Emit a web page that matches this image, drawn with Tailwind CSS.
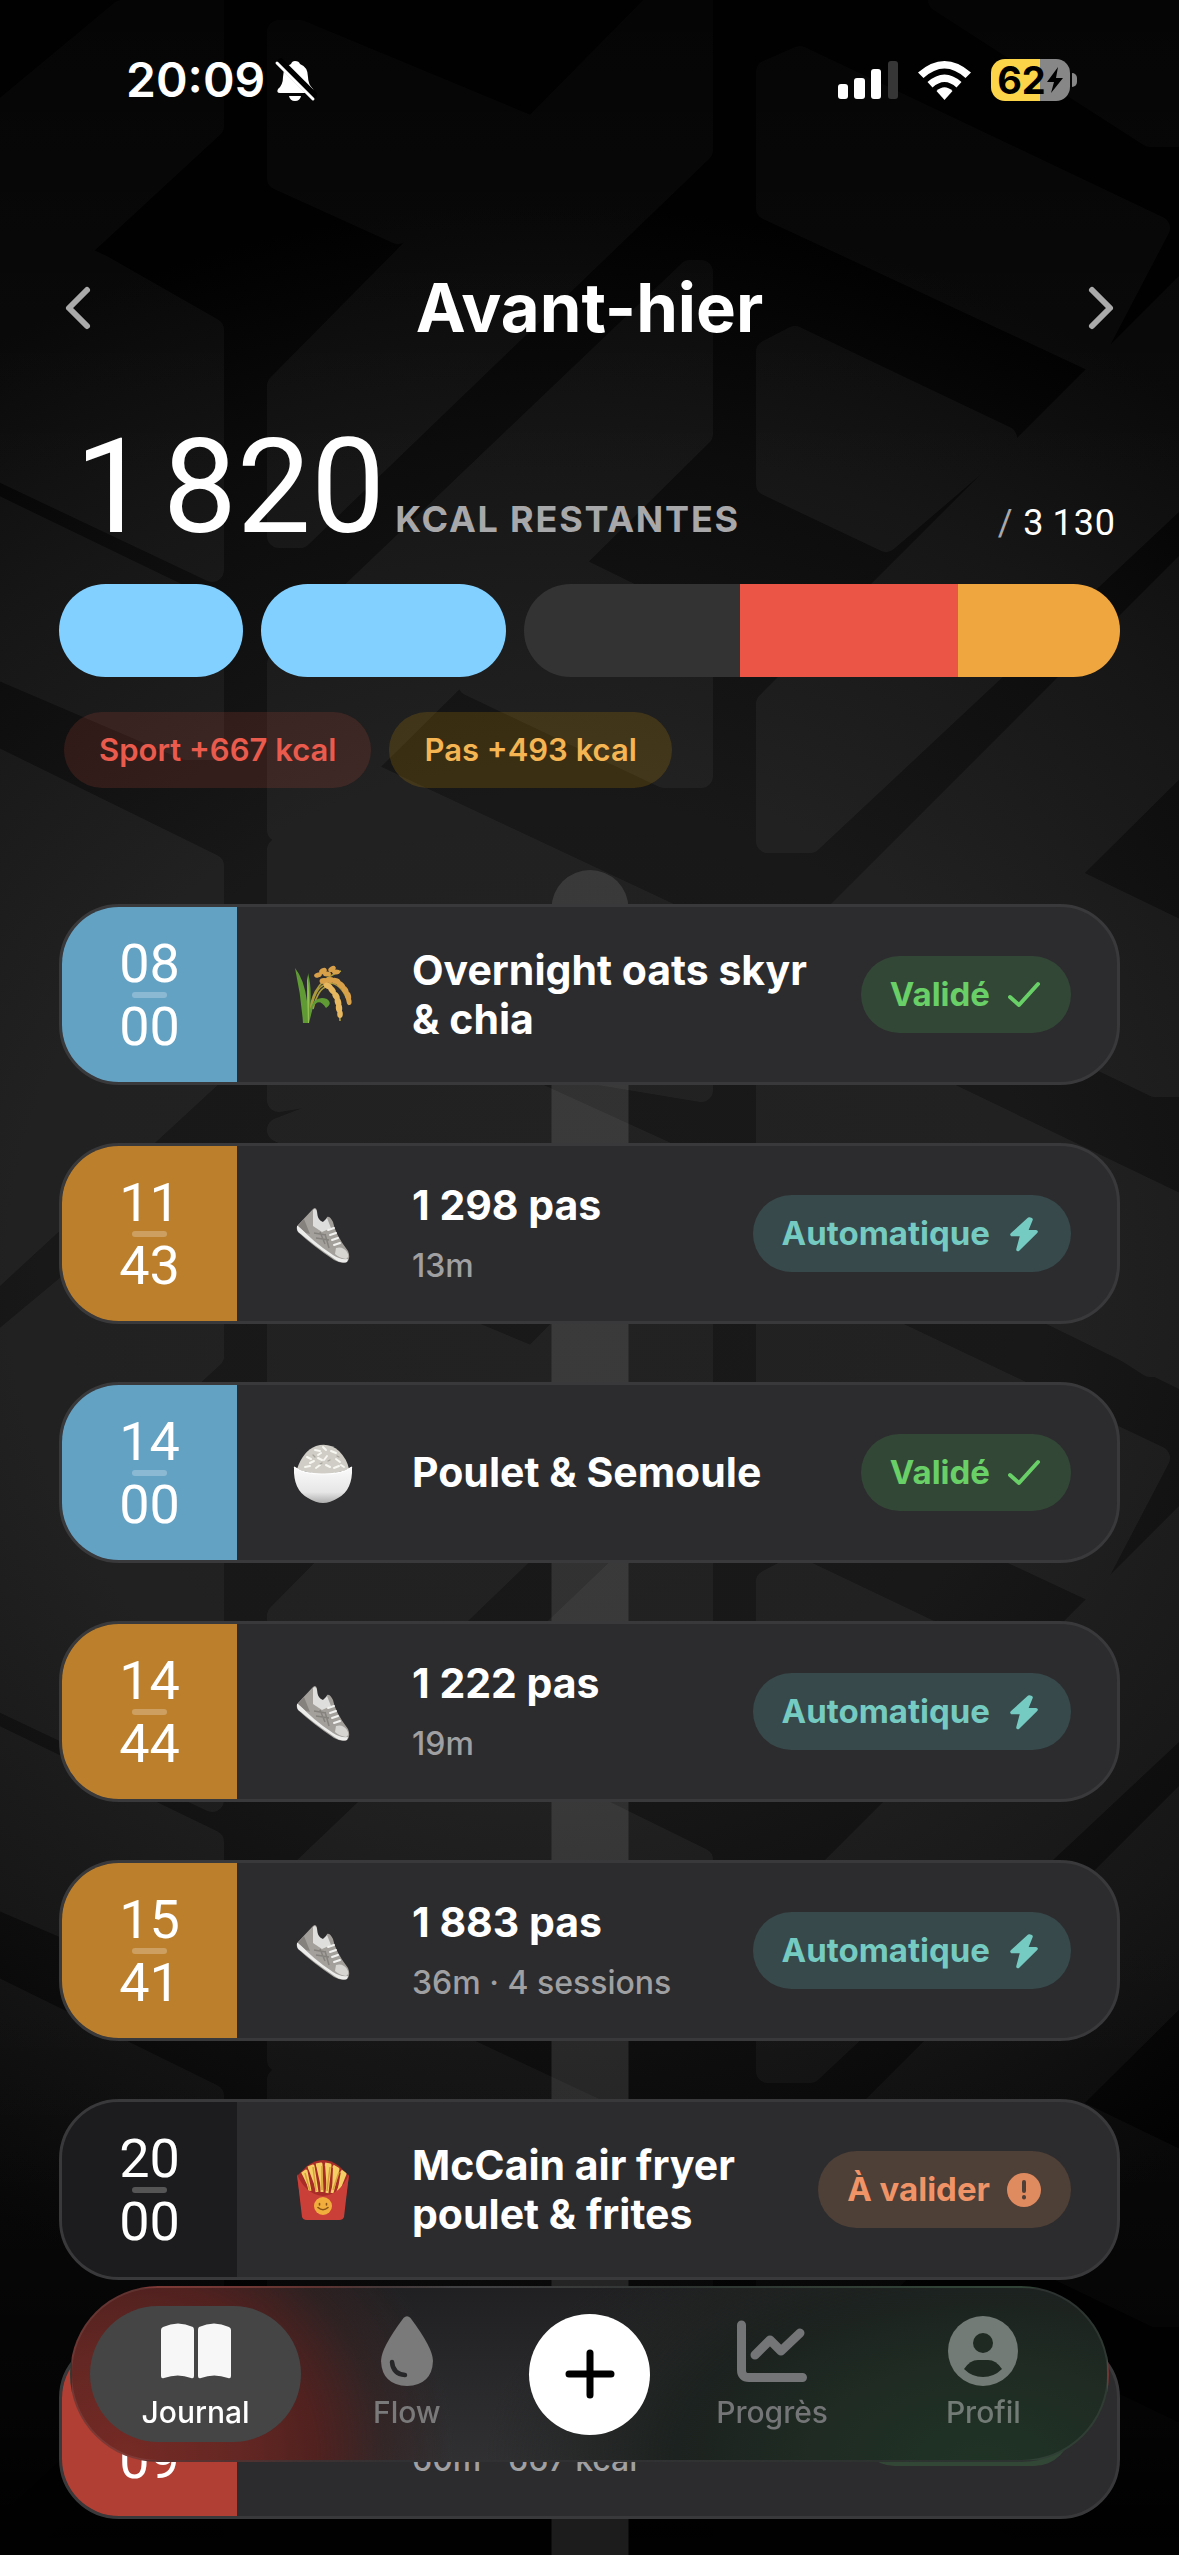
<!DOCTYPE html>
<html lang="fr">
<head>
<meta charset="utf-8">
<meta name="viewport" content="width=device-width, initial-scale=1">
<title>Journal</title>
<script src="https://cdn.jsdelivr.net/npm/@tailwindcss/browser@4"></script>
</head>
<body class="bg-black text-white font-['Inter',sans-serif]">

<!-- Shared icons -->
<svg class="absolute size-0" aria-hidden="true">
  <defs><linearGradient id="bowlFill" x1="0" y1="0" x2="0" y2="1"><stop offset="0" stop-color="#fbfbfb"/><stop offset=".7" stop-color="#e6e6e6"/><stop offset="1" stop-color="#aeaeae"/></linearGradient></defs>
  <symbol id="check" viewBox="0 0 36 36"><path d="M4 20l9 8L32 7" fill="none" stroke="currentColor" stroke-width="4" stroke-linecap="round" stroke-linejoin="round"/></symbol>
  <symbol id="bolt" viewBox="0 0 36 36"><path d="M23 3L6 18.500H16L12 33.500L30 15.800H20L25 3.500Z" fill="currentColor" stroke="currentColor" stroke-width="3.500" stroke-linejoin="round"/></symbol>
  <symbol id="shoe" viewBox="0 0 60 60">
    <path d="M4 22L20 5Q23 2 24 7Q24 15 29 18Q33 18 34 13Q37 12 40 18Q42 30 55 47Q58 54 54 58Q48 60 41 56Q20 42 5 28Q3 25 4 22Z" fill="#a3a09c"/>
    <path d="M20 6Q23 3 24 8Q24 16 30 18L34 14L38 24L29 28L20 22Z" fill="#dededc"/>
    <path d="M4 22Q3 27 8 30Q22 42 40 54Q48 60 54 58L55 55Q47 56 40 51Q20 38 6 22Z" fill="#ececea"/>
    <path d="M43 44Q50 42 54 48Q57 53 53 55Q46 54 42 50Z" fill="#d6d5d2"/>
    <path d="M5 22L11 15L17 30L13 29Z" fill="#85827e"/>
    <path d="M35 26l6-2M37 31l6-2M39 36l6-2M41 41l6-2" stroke="#f2f2f0" stroke-width="2" stroke-linecap="round"/>
    <path d="M21 29l12 2M23 34l13 2M32 30l4 14M27 28l5 12" stroke="#85827e" stroke-width="1.500" fill="none"/>
  </symbol>
  <symbol id="wheat" viewBox="0 0 60 60">
    <path d="M17 45Q20 16 48 6M18 46Q22 18 38 18Q50 20 56 40M20 44Q26 20 36 22Q46 28 47 56" fill="none" stroke="#a99a3e" stroke-width="1.600"/>
    <path d="M10 58Q8 30 2 3Q11 14 14 36Q15 20 15 8Q19 22 17 44Q22 30 34 34Q40 38 33 43Q26 32 20 42L16 58Z" fill="#5f9a35"/>
    <path d="M15 58Q14 36 14 10Q17 24 16 44L16 58Z" fill="#8fc050"/>
    <g fill="#d9a04a">
      <ellipse cx="25" cy="10" rx="4" ry="2.500" transform="rotate(-20 25 10)"/><ellipse cx="30" cy="6" rx="4" ry="2.800" transform="rotate(-30 30 6)"/><ellipse cx="34" cy="9" rx="4" ry="2.500"/><ellipse cx="39" cy="4" rx="4" ry="2.600" transform="rotate(-30 39 4)"/><ellipse cx="43" cy="7" rx="4" ry="2.400"/>
      <ellipse cx="31" cy="16" rx="4.500" ry="3"/><ellipse cx="37" cy="15" rx="4.500" ry="3"/><ellipse cx="43" cy="16" rx="4.500" ry="3" transform="rotate(20 43 16)"/><ellipse cx="48" cy="20" rx="4.500" ry="3" transform="rotate(40 48 20)"/><ellipse cx="52" cy="25" rx="4.500" ry="3" transform="rotate(60 52 25)"/><ellipse cx="55" cy="31" rx="4.500" ry="3" transform="rotate(75 55 31)"/><ellipse cx="56" cy="36" rx="4" ry="2.500" transform="rotate(80 56 36)"/>
    </g>
    <g fill="#e8b860">
      <ellipse cx="35" cy="21" rx="4.500" ry="3" transform="rotate(25 35 21)"/><ellipse cx="39" cy="25" rx="4.500" ry="3" transform="rotate(50 39 25)"/><ellipse cx="43" cy="31" rx="4.500" ry="3.200" transform="rotate(60 43 31)"/><ellipse cx="45" cy="37" rx="4.500" ry="3.200" transform="rotate(75 45 37)"/><ellipse cx="46" cy="43" rx="4.500" ry="3.200" transform="rotate(85 46 43)"/><ellipse cx="47" cy="49" rx="4" ry="2.800" transform="rotate(90 47 49)"/>
    </g>
  </symbol>
  <symbol id="bowl" viewBox="0 0 60 60">
    <path d="M4 26Q10 8 23 3Q36 -1 46 8Q54 16 56 26Q30 36 4 26Z" fill="#cfcdc5"/>
    <path d="M14 14l4 2M22 7l5 1M30 4l3 3M38 8l5 2M17 20l4-2M25 15l4 2M34 13l-3 4M43 16l4 3M12 24l5-1M23 25l4-3M33 22l4 2M41 25l5-2M28 10l-3 2M48 22l3 2" stroke="#f7f6f0" stroke-width="2" stroke-linecap="round"/>
    <path d="M20 12l2 2M35 18l2-1M29 20l-2 1M46 14l-2-1" stroke="#a5a39b" stroke-width="1.200" stroke-linecap="round"/>
    <path d="M1 24Q10 31 30 31T59 24Q60 47 45 55Q37 60 30 60T15 55Q0 47 1 24Z" fill="url(#bowlFill)"/>
    <path d="M1 24Q10 31 30 31T59 24" fill="none" stroke="#fff" stroke-width="1.200"/>
  </symbol>
  <symbol id="fries" viewBox="0 0 60 60">
    <path d="M4 16L14 6Q30 -6 46 6L56 16L50 57Q49 60 45 60H15Q11 60 10 57Z" fill="#a82c27"/>
    <path d="M9 14l4-3 4 20M15 8l5-2 4 26M23 5l5-1 1 28M32 4l5 1-3 28M40 6l5 3-6 24M48 11l4 3-8 20" fill="#f5cf66" stroke="#f5cf66" stroke-width="3" stroke-linejoin="round"/>
    <path d="M12 13l5 18M20 7l3 24M29 6v24M37 7l-3 24M46 12l-6 18" stroke="#d99f38" stroke-width="1.500"/>
    <path d="M4 14Q12 34 30 36Q48 34 56 14L51 57Q50 60 46 60H14Q10 60 9 57Z" fill="#ca3f38"/>
    <circle cx="30" cy="46" r="9" fill="#f2ae3c"/>
    <path d="M26.500 43.500v1.500M33.500 43.500v1.500M25 47.500Q30 52 35 47.500" fill="none" stroke="#8a5418" stroke-width="1.600" stroke-linecap="round"/>
  </symbol>
</svg>

<div class="relative min-h-screen overflow-hidden bg-[radial-gradient(ellipse_95%_42%_at_46%_50%,#191919_0%,#181818_45%,#0c0c0c_78%,#010101_100%)]">

  <!-- Faint chevron pattern -->
  <svg class="absolute inset-0 size-full" viewBox="0 0 1179 2555" preserveAspectRatio="none" aria-hidden="true">
    <defs>
      <linearGradient id="fade" x1="0" y1="0" x2="0" y2="2555" gradientUnits="userSpaceOnUse">
        <stop offset="0" stop-color="#fff" stop-opacity=".02"/><stop offset=".2" stop-color="#fff" stop-opacity=".045"/><stop offset=".75" stop-color="#fff" stop-opacity=".045"/><stop offset=".95" stop-color="#fff" stop-opacity=".015"/><stop offset="1" stop-color="#fff" stop-opacity="0"/>
      </linearGradient>
      <mask id="tiles" maskUnits="userSpaceOnUse" x="0" y="0" width="1179" height="2555">
        <g id="tile" fill="#fff" stroke="#fff" stroke-width="24" stroke-linejoin="round">
          <path d="M122 12L212 0V126L-20 340V130Z"/>
          <path d="M-20 210L100 266L212 330V570L-20 460Z"/>
          <path d="M-20 500L212 612V748H186L-20 660Z"/>
          <path d="M-20 752L212 866V1074L-20 1288Z"/>
          <path d="M212 1160V1354L-20 1560V1392Z"/>
          <path d="M279 32H300L560 140L398 232L279 178Z"/>
          <path d="M701 0V150L300 536H279V386L660 0Z"/>
          <path d="M690 272H701V434L300 830H279V664Z"/>
          <path d="M583 572L701 630V776H664L470 684Z"/>
          <path d="M279 850L360 770L701 930V1090L520 1060L279 1100Z"/>
          <path d="M279 1130L460 1060L701 1170V1330L279 1130Z"/>
          <path d="M768 72L800 58L1158 228L1090 358L768 208Z"/>
          <path d="M940 0H1200V135H1150Z"/>
          <path d="M768 352L795 338L1005 438L886 540L768 484Z"/>
          <path d="M1200 272V476L810 841H768V704Z"/>
          <path d="M1200 552V742L768 1170V984Z"/>
          <path d="M1076 882L1200 942V1085H1155L975 998Z"/>
          <path d="M880 1062L1200 1216V1386L768 1174Z"/>
        </g>
        <use href="#tile" y="1230"/>
      </mask>
    </defs>
    <rect width="1179" height="2555" fill="url(#fade)" mask="url(#tiles)"/>
  </svg>

  <!-- Status bar -->
  <div class="relative flex h-[160px] items-center justify-between pr-[102px] pl-[126px]">
    <div class="flex items-center gap-2">
      <span class="text-[48px] leading-[60px] font-semibold">20:09</span>
      <svg class="size-[44px]" viewBox="0 0 44 44" fill="#fff" aria-label="Silencieux">
        <path d="M22 3Q26 3 27 6Q35 9 35 19Q35 26 40 31Q42 35 38 35H7Q3 35 5 31Q10 27 10 19Q10 9 18 6Q19 3 22 3Z"/><path d="M16 38H28Q27 43 22 43T16 38Z"/>
        <path d="M5 2L43 40" stroke="#000" stroke-width="8"/><path d="M4 5L40 41" stroke="#fff" stroke-width="3" stroke-linecap="round"/>
      </svg>
    </div>
    <div class="flex items-center gap-5">
      <svg class="h-[38px] w-[60px]" viewBox="0 0 60 38" fill="#fff" aria-label="Réseau"><rect y="23" width="10" height="15" rx="3"/><rect x="16" y="17" width="11" height="21" rx="3"/><rect x="33" y="8" width="10" height="30" rx="3"/><rect x="50" width="10" height="38" rx="3" fill="#363636"/></svg>
      <svg class="h-[39px] w-[53px]" viewBox="0 0 53 39" fill="#fff" aria-label="Wi-Fi"><path d="M26.500 39L18.500 30Q26.500 22.500 34.500 30Z"/><path d="M9.500 21Q26.500 6 43.500 21L38.500 26.500Q26.500 15.500 14.500 26.500Z"/><path d="M0 11.500Q26.500-11.500 53 11.500L47.500 17Q26.500-2 5.500 17Z"/></svg>
      <div class="flex items-center gap-[2px]">
        <div class="flex h-[42px] w-[79px] items-center justify-center rounded-[14px] bg-linear-to-r from-[#fbd44a] from-62% to-[#878787] to-62% text-[38px] leading-none font-bold text-black">62<svg class="h-[28px] w-[18px]" viewBox="0 0 18 28"><path d="M12 1L1 16H8L5 27L17 12H10Z" fill="#000"/></svg></div>
        <div class="h-[14px] w-[5px] rounded-r-full bg-[#878787]"></div>
      </div>
    </div>
  </div>

  <main class="relative px-[59px] pb-8">
    <header class="mt-[108px] flex h-20 items-center justify-between">
      <button aria-label="Jour précédent" class="-ml-2 p-3 text-[#aaaaaa]"><svg class="h-[46px] w-[30px]" viewBox="0 0 30 46" fill="none" stroke="currentColor" stroke-width="6" stroke-linecap="round" stroke-linejoin="round"><path d="M24 5L6 23L24 41"/></svg></button>
      <h1 class="text-[67px] leading-[80px] font-bold">Avant-hier</h1>
      <button aria-label="Jour suivant" class="-mr-2 p-3 text-[#aaaaaa]"><svg class="h-[46px] w-[30px]" viewBox="0 0 30 46" fill="none" stroke="currentColor" stroke-width="6" stroke-linecap="round" stroke-linejoin="round"><path d="M6 5L24 23L6 41"/></svg></button>
    </header>

    <section class="mt-[89px] flex items-end justify-between pr-1 pl-4">
      <p class="flex items-baseline gap-[10px]"><span class="font-['Roboto',sans-serif] text-[132px] leading-[100px]">1&#8202;820</span><span class="text-[36px] leading-none font-bold tracking-wider text-[#a8a8aa]">KCAL RESTANTES</span></p>
      <p class="font-['Roboto',sans-serif] text-[36px] leading-7 tracking-wide"><span class="text-[#a8a8aa]">/</span> 3&#8201;130</p>
    </section>

    <section aria-label="Répartition des calories" class="mt-[47px] flex h-[93px] gap-[18px]">
      <div class="rounded-full bg-[#82d0ff]" style="flex:184 0 0"></div>
      <div class="rounded-full bg-[#82d0ff]" style="flex:245 0 0"></div>
      <div class="flex overflow-hidden rounded-full" style="flex:597 0 0">
        <div class="bg-[#333333]" style="flex:217 0 0"></div>
        <div class="bg-[#eb5545]" style="flex:218 0 0"></div>
        <div class="bg-[#f0a63f]" style="flex:162 0 0"></div>
      </div>
    </section>

    <div class="mt-[35px] ml-[5px] flex gap-[18px] text-[31px] leading-[76px] font-semibold">
      <span class="rounded-full bg-[#eb5545]/15 px-[35px] text-[#eb5b4d]">Sport +667 kcal</span>
      <span class="rounded-full bg-[#f0a500]/17 px-[35px] text-[#f5b553]">Pas +493 kcal</span>
    </div>

    <!-- Timeline -->
    <div class="relative mt-[82px] pt-[34px]">
      <div class="absolute top-0 -bottom-10 left-1/2 w-[77px] -translate-x-1/2 rounded-t-full bg-white/11"></div>
      <ol class="relative flex flex-col gap-[58px]">

        <li class="flex h-[181px] overflow-hidden rounded-[60px] border-3 border-[#39393b] bg-[#2c2c2e]">
          <time datetime="08:00" class="flex w-[175px] flex-col items-center justify-center bg-[#64a2c4] font-['Roboto',sans-serif] text-[54px] leading-[57px]"><span>08</span><i class="h-[6px] w-[35px] rounded-full bg-white/25"></i><span>00</span></time>
          <div class="flex flex-1 items-center pr-[46px] pl-14">
            <svg class="size-[60px]"><use href="#wheat"/></svg>
            <h2 class="ml-[59px] flex-1 text-[41px] leading-[49px] font-bold">Overnight oats skyr<br>&amp; chia</h2>
            <span class="flex h-[77px] items-center gap-4 rounded-full bg-[#334737] px-[29px] text-[33px] font-bold text-[#69cf67]">Validé<svg class="size-9"><use href="#check"/></svg></span>
          </div>
        </li>

        <li class="flex h-[181px] overflow-hidden rounded-[60px] border-3 border-[#39393b] bg-[#2c2c2e]">
          <time datetime="11:43" class="flex w-[175px] flex-col items-center justify-center bg-[#bc802d] font-['Roboto',sans-serif] text-[54px] leading-[57px]"><span>11</span><i class="h-[6px] w-[35px] rounded-full bg-white/25"></i><span>43</span></time>
          <div class="flex flex-1 items-center pr-[46px] pl-14">
            <svg class="size-[60px]"><use href="#shoe"/></svg>
            <div class="ml-[59px] flex-1"><h2 class="text-[41px] leading-[49px] font-bold">1 298 pas</h2><p class="mt-4 text-[32px] leading-10 font-medium text-[#a0a0a2]">13m</p></div>
            <span class="flex h-[77px] items-center gap-4 rounded-full bg-[#37494b] px-[29px] text-[33px] font-bold text-[#75cbc2]">Automatique<svg class="size-9"><use href="#bolt"/></svg></span>
          </div>
        </li>

        <li class="flex h-[181px] overflow-hidden rounded-[60px] border-3 border-[#39393b] bg-[#2c2c2e]">
          <time datetime="14:00" class="flex w-[175px] flex-col items-center justify-center bg-[#64a2c4] font-['Roboto',sans-serif] text-[54px] leading-[57px]"><span>14</span><i class="h-[6px] w-[35px] rounded-full bg-white/25"></i><span>00</span></time>
          <div class="flex flex-1 items-center pr-[46px] pl-14">
            <svg class="size-[60px]"><use href="#bowl"/></svg>
            <h2 class="ml-[59px] flex-1 text-[41px] leading-[49px] font-bold">Poulet &amp; Semoule</h2>
            <span class="flex h-[77px] items-center gap-4 rounded-full bg-[#334737] px-[29px] text-[33px] font-bold text-[#69cf67]">Validé<svg class="size-9"><use href="#check"/></svg></span>
          </div>
        </li>

        <li class="flex h-[181px] overflow-hidden rounded-[60px] border-3 border-[#39393b] bg-[#2c2c2e]">
          <time datetime="14:44" class="flex w-[175px] flex-col items-center justify-center bg-[#bc802d] font-['Roboto',sans-serif] text-[54px] leading-[57px]"><span>14</span><i class="h-[6px] w-[35px] rounded-full bg-white/25"></i><span>44</span></time>
          <div class="flex flex-1 items-center pr-[46px] pl-14">
            <svg class="size-[60px]"><use href="#shoe"/></svg>
            <div class="ml-[59px] flex-1"><h2 class="text-[41px] leading-[49px] font-bold">1 222 pas</h2><p class="mt-4 text-[32px] leading-10 font-medium text-[#a0a0a2]">19m</p></div>
            <span class="flex h-[77px] items-center gap-4 rounded-full bg-[#37494b] px-[29px] text-[33px] font-bold text-[#75cbc2]">Automatique<svg class="size-9"><use href="#bolt"/></svg></span>
          </div>
        </li>

        <li class="flex h-[181px] overflow-hidden rounded-[60px] border-3 border-[#39393b] bg-[#2c2c2e]">
          <time datetime="15:41" class="flex w-[175px] flex-col items-center justify-center bg-[#bc802d] font-['Roboto',sans-serif] text-[54px] leading-[57px]"><span>15</span><i class="h-[6px] w-[35px] rounded-full bg-white/25"></i><span>41</span></time>
          <div class="flex flex-1 items-center pr-[46px] pl-14">
            <svg class="size-[60px]"><use href="#shoe"/></svg>
            <div class="ml-[59px] flex-1"><h2 class="text-[41px] leading-[49px] font-bold">1 883 pas</h2><p class="mt-4 text-[32px] leading-10 font-medium text-[#a0a0a2]">36m · 4 sessions</p></div>
            <span class="flex h-[77px] items-center gap-4 rounded-full bg-[#37494b] px-[29px] text-[33px] font-bold text-[#75cbc2]">Automatique<svg class="size-9"><use href="#bolt"/></svg></span>
          </div>
        </li>

        <li class="flex h-[181px] overflow-hidden rounded-[60px] border-3 border-[#39393b] bg-[#2c2c2e]">
          <time datetime="20:00" class="flex w-[175px] flex-col items-center justify-center bg-[#1c1c1e] font-['Roboto',sans-serif] text-[54px] leading-[57px]"><span>20</span><i class="h-[6px] w-[35px] rounded-full bg-white/25"></i><span>00</span></time>
          <div class="flex flex-1 items-center pr-[46px] pl-14">
            <svg class="size-[60px]"><use href="#fries"/></svg>
            <h2 class="ml-[59px] flex-1 text-[41px] leading-[49px] font-bold">McCain air fryer<br>poulet &amp; frites</h2>
            <span class="flex h-[77px] items-center gap-4 rounded-full bg-[#4e3f37] px-[29px] text-[33px] font-bold text-[#f09468]">À valider<svg class="size-9" viewBox="0 0 36 36"><circle cx="18" cy="18" r="17" fill="#e08a60"/><path d="M18 10v9M18 25v.5" stroke="#4e3f37" stroke-width="4" stroke-linecap="round"/></svg></span>
          </div>
        </li>

        <!-- Entry partly under the tab bar -->
        <li class="flex h-[181px] overflow-hidden rounded-[60px] border-3 border-[#39393b] bg-[#2c2c2e]">
          <div class="flex w-[175px] flex-col items-center justify-end bg-[#b13f33] pb-7 font-['Roboto',sans-serif] text-[54px] leading-[57px]"><span>09</span></div>
          <div class="flex flex-1 items-center pr-[46px] pl-14">
            <p class="mt-[62px] ml-[119px] flex-1 text-[32px] leading-10 font-medium text-[#a0a0a2]">60m · 667 kcal</p>
            <span class="h-[74px] w-[213px] rounded-full bg-[#334737]"></span>
          </div>
        </li>
      </ol>
    </div>
  </main>

  <!-- Tab bar -->
  <nav class="fixed inset-x-[70px] bottom-[93px] flex h-44 items-center rounded-[88px] border-2 border-white/8 bg-[radial-gradient(ellipse_32%_180%_at_5%_100%,#762a25_0%,#642723_35%,#50211f_58%,#38212199_78%,#2a2a2c00_100%),radial-gradient(ellipse_48%_160%_at_88%_100%,#1f3325_0%,#1f2b23_35%,#1c221f_62%,#1f222088_80%,#2a2a2c00_100%),linear-gradient(180deg,#202022,#303032)] px-[18px] text-[30px] leading-9 font-medium">
    <a href="#" aria-current="page" class="flex h-[136px] flex-1 flex-col items-center gap-2 rounded-full bg-[#454545] pt-[10px]">
      <svg class="size-[70px]" viewBox="0 0 70 70" fill="#f7f7f7"><path d="M0 14Q0 12 2 11Q17 4 32 11Q33 12 33 14V60Q33 63 30 62Q17 57 3 62Q0 63 0 60Z"/><path d="M37 14Q37 12 38 11Q53 4 68 11Q70 12 70 14V60Q70 63 67 62Q53 57 40 62Q37 63 37 60Z"/></svg>
      <span>Journal</span>
    </a>
    <a href="#" class="flex h-[136px] flex-1 flex-col items-center gap-2 pt-[10px] text-[#7a7a7b]">
      <svg class="size-[70px]" viewBox="0 0 70 70"><path d="M31.500 2Q35-1.500 38.500 2Q61 32 61 45Q60 69 35 70Q10 69 9 45Q9 32 31.500 2Z" fill="currentColor"/><path d="M20 46Q21 58 33 59" fill="none" stroke="#272729" stroke-width="4.500" stroke-linecap="round"/></svg>
      <span>Flow</span>
    </a>
    <div class="flex w-[154px] justify-center"><button aria-label="Ajouter" class="grid size-[121px] place-items-center rounded-full bg-white"><svg class="size-[50px]" viewBox="0 0 50 50" stroke="#000" stroke-width="7" stroke-linecap="round"><path d="M25 4v42M4 25h42"/></svg></button></div>
    <a href="#" class="flex h-[136px] flex-1 flex-col items-center gap-2 pt-[10px] text-[#747576]">
      <svg class="size-[70px]" viewBox="0 0 70 70" fill="none" stroke="currentColor" stroke-width="9" stroke-linecap="round" stroke-linejoin="round"><path d="M4.500 9V54Q4.500 61.500 12 61.500H65.500"/><path d="M18 39L33 24L44 35L63 17"/></svg>
      <span>Progrès</span>
    </a>
    <a href="#" class="flex h-[136px] flex-1 flex-col items-center gap-2 pt-[10px] text-[#737b76]">
      <svg class="size-[70px]" viewBox="0 0 70 70"><circle cx="35" cy="35" r="35" fill="currentColor"/><circle cx="35" cy="27" r="10" fill="#1e2a22"/><path d="M16 53Q22 44 30 44H40Q48 44 54 53Q46 61 35 61T16 53Z" fill="#1e2a22"/></svg>
      <span>Profil</span>
    </a>
  </nav>
</div>
</body>
</html>
